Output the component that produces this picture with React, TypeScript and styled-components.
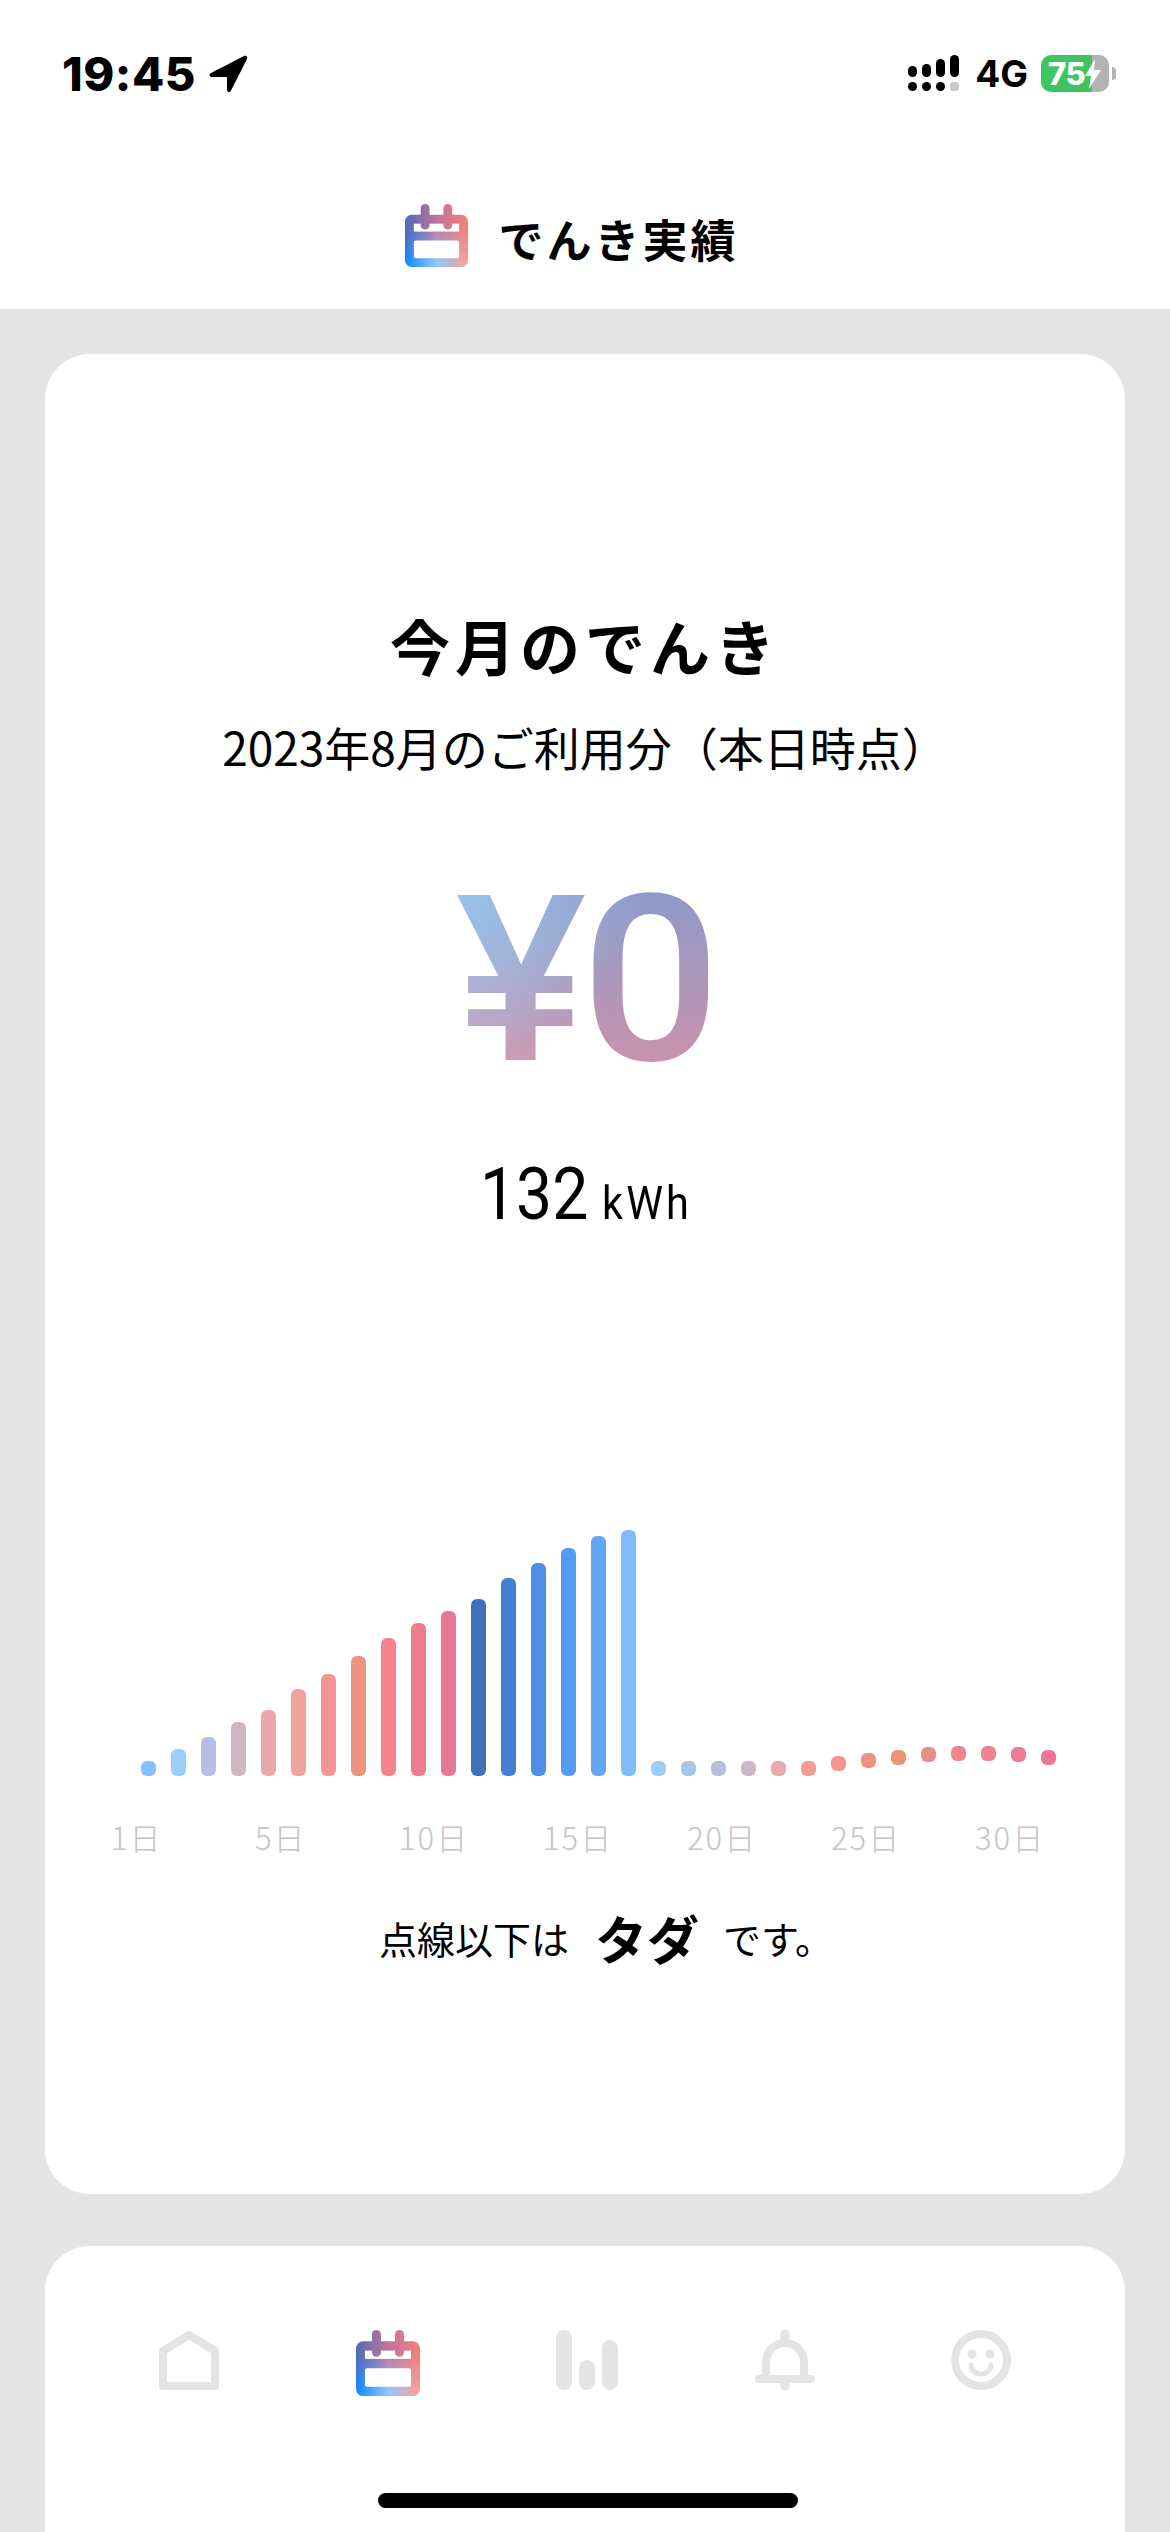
import React, { useId } from "react";
import styled, { createGlobalStyle } from "styled-components";

const GREY = "#e4e4e4";
const JP = `"Noto Sans CJK JP", "Noto Sans", sans-serif`;

const Global = createGlobalStyle`
  html, body { margin: 0; padding: 0; background: ${GREY}; }
  * { box-sizing: border-box; }
`;

const Page = styled.div`
  position: relative;
  width: 1170px;
  height: 2532px;
  overflow: hidden;
  background: ${GREY};
  font-family: ${JP};
  color: #000;
`;

const Top = styled.header`
  height: 309px;
  background: #fff;
  display: flex;
  flex-direction: column;
`;

const StatusBar = styled.div`
  height: 200px;
  padding: 50px 54px 0 62px;
  display: flex;
  justify-content: space-between;
  align-items: flex-start;
`;

const StatusLeft = styled.div`
  display: flex;
  align-items: center;
  gap: 12px;
`;

const Time = styled.span`
  font-family: Inter, sans-serif;
  font-weight: 800;
  font-size: 47px;
  line-height: 48px;
  letter-spacing: 0.5px;
`;

const StatusRight = styled.div`
  display: flex;
  align-items: center;
  padding-top: 5px;
`;

const Network = styled.span`
  font-family: Inter, sans-serif;
  font-weight: 700;
  font-size: 37px;
  line-height: 37px;
  margin: 0 13px 0 15px;
`;

const Battery = styled.div`
  position: relative;
  width: 68px;
  height: 37px;
  border-radius: 10px;
  background: linear-gradient(90deg, #3ec55f 0 51px, #b3b3b3 51px);
  color: #fff;
  font-family: Inter, sans-serif;
  font-weight: 800;
  font-size: 31px;
  line-height: 37px;
  letter-spacing: -0.5px;
  padding-left: 7px;
`;

const BatteryBolt = styled.svg`
  position: absolute;
  left: 44px;
  top: 4px;
`;

const BatteryNub = styled.div`
  width: 4px;
  height: 13px;
  margin-left: 3px;
  border-radius: 0 7px 7px 0;
  background: #b3b3b3;
`;

const TitleRow = styled.div`
  display: flex;
  align-items: center;
  justify-content: center;
  gap: 30px;
  height: 66px;
  margin-top: 2px;
  padding-right: 26px;
`;

const TitleText = styled.h1`
  margin: 0;
  font-size: 45px;
  font-weight: 700;
  line-height: 60px;
  letter-spacing: 3px;
  position: relative;
  top: 4px;
`;

const Card = styled.section`
  margin: 45px 45px 0;
  height: 1840px;
  background: #fff;
  border-radius: 45px;
  padding-top: 251px;
  display: flex;
  flex-direction: column;
  align-items: center;
`;

const Heading = styled.h2`
  margin: 0;
  font-size: 60px;
  font-weight: 700;
  line-height: 80px;
  letter-spacing: 5px;
`;

const Sub = styled.p`
  margin: 31px 0 0;
  font-size: 46px;
  font-weight: 400;
  line-height: 60px;
  white-space: nowrap;
`;

const Amount = styled.div`
  margin-top: 75px;
  font-family: Roboto, sans-serif;
  font-weight: 500;
  font-size: 232px;
  line-height: 260px;
  letter-spacing: -5px;
  padding: 0 12px 0 14px;
  transform: scaleX(1.06);
  background: radial-gradient(circle at 8% 14%, rgba(150, 200, 240, 0.85), rgba(150, 200, 240, 0) 52%),
    linear-gradient(90deg, rgba(255, 255, 255, 0.16), rgba(255, 255, 255, 0) 60%),
    linear-gradient(180deg, #8c9aca 14%, #cd92aa 86%);
  -webkit-background-clip: text;
  background-clip: text;
  color: transparent;
`;

const Usage = styled.div`
  margin-top: 38px;
  height: 90px;
  display: flex;
  align-items: baseline;
  line-height: 90px;
  font-family: Roboto, sans-serif;
`;

const UsageValue = styled.span`
  display: inline-block;
  font-size: 73px;
  transform: scaleX(0.88);
  transform-origin: left;
  margin-right: -2px;
`;

const UsageUnit = styled.span`
  display: inline-block;
  font-size: 46px;
  letter-spacing: 3.5px;
  transform: scaleX(0.9);
  transform-origin: left;
  margin-right: -12px;
`;

const Chart = styled.div`
  align-self: stretch;
  margin-top: 291px;
  height: 246px;
  padding-left: 96px;
  display: flex;
  align-items: flex-end;
  gap: 15px;
`;

const Bar = styled.div<{ $h: number; $lift: number; $c: string }>`
  flex: 0 0 15px;
  height: ${(p) => p.$h}px;
  margin-bottom: ${(p) => p.$lift}px;
  background: ${(p) => p.$c};
  border-radius: 6px;
`;

const Axis = styled.div`
  align-self: stretch;
  margin-top: 41px;
  padding-left: 66px;
  display: grid;
  grid-template-columns: repeat(7, 144px);
  color: #c4c4c4;
  font-size: 31px;
  font-weight: 300;
  line-height: 40px;
  letter-spacing: 2px;
`;

const Note = styled.div`
  margin-top: 49px;
  margin-left: 42px;
  display: flex;
  align-items: center;
  line-height: 64px;
  font-size: 38px;
`;

const Tada = styled.strong`
  font-size: 52px;
  font-weight: 700;
  margin: 0 24px 0 26px;
  letter-spacing: 0;
`;

const NavCard = styled.nav`
  margin: 52px 45px 0;
  height: 400px;
  background: #fff;
  border-radius: 45px 45px 0 0;
  padding: 84px 114px 0 114px;
  display: flex;
  justify-content: space-between;
  align-items: flex-start;
`;

const NavIcon = styled.svg`
  display: block;
  flex: none;
`;

const HomeBar = styled.div`
  position: absolute;
  left: 378px;
  top: 2493px;
  width: 420px;
  height: 15px;
  border-radius: 8px;
  background: #000;
`;

const CalendarIcon: React.FC<{ w: number; h: number }> = ({ w, h }) => {
  const id = useId().replace(/[^a-zA-Z0-9]/g, "");
  return (
    <NavIcon width={w} height={h} viewBox="0 0 64 64" preserveAspectRatio="none">
      <defs>
        <linearGradient id={`${id}b`} x1="0" x2="1" y1="0" y2="0">
          <stop offset="0" stopColor="#0f86ff" />
          <stop offset="0.5" stopColor="#8fc9ff" />
          <stop offset="1" stopColor="#ff9c90" />
        </linearGradient>
        <linearGradient id={`${id}t`} x1="0" x2="1" y1="0" y2="0">
          <stop offset="0" stopColor="#4f6cb6" />
          <stop offset="0.5" stopColor="#c2749a" />
          <stop offset="1" stopColor="#f27f80" />
        </linearGradient>
        <linearGradient id={`${id}v`} x1="0" x2="0" y1="0" y2="1">
          <stop offset="0.35" stopColor="#fff" />
          <stop offset="0.9" stopColor="#000" />
        </linearGradient>
        <mask id={`${id}s`}>
          <rect x="0" y="11" width="64" height="53" rx="7" fill="#fff" />
          <rect x="9" y="20" width="46" height="8" fill="#000" />
          <rect x="9" y="37" width="46" height="18" rx="2" fill="#000" />
          <rect x="16" y="0" width="9" height="26" rx="4.5" fill="#fff" />
          <rect x="39" y="0" width="9" height="26" rx="4.5" fill="#fff" />
        </mask>
        <mask id={`${id}f`}>
          <rect width="64" height="64" fill={`url(#${id}v)`} />
        </mask>
      </defs>
      <g mask={`url(#${id}s)`}>
        <rect width="64" height="64" fill={`url(#${id}b)`} />
        <rect width="64" height="64" fill={`url(#${id}t)`} mask={`url(#${id}f)`} />
      </g>
    </NavIcon>
  );
};

const HEIGHTS = [15, 27, 39, 54, 66, 87, 102, 120, 138, 153, 165, 177, 198, 213, 228, 240, 246];
const LIFTS = [0, 0, 0, 0, 0, 0, 5, 8, 11, 14, 15, 15, 14, 11];
const COLORS = [
  "#84c0fc", "#9dcdf9", "#b6bee6", "#ceb6c2", "#e8a9ad", "#f2a39c", "#f39592", "#ec9480",
  "#f4838a", "#ef7b8f", "#e77795", "#3d72bb", "#4380d3", "#4b8fe6", "#549cef", "#61a7f5",
  "#80bbfb", "#9dcdfb", "#a7c4e9", "#b7bddc", "#ccb7c4", "#e8aaad", "#ee9f90", "#f39690",
  "#ef9282", "#eb9478", "#e58f86", "#f1838a", "#f0818d", "#ee7b92", "#ec7793",
];
const DAYS = ["1日", "5日", "10日", "15日", "20日", "25日", "30日"];

export default function App() {
  return (
    <Page>
      <Global />
      <Top>
        <StatusBar>
          <StatusLeft>
            <Time>19:45</Time>
            <svg width="40" height="38" viewBox="0 0 40 38">
              <path d="M36 1 L3 18 C0.5 19.5 1.5 22 4 22 H19 V34.5 C19 37.5 22 38 23 35.5 L39 4 C40 1.5 38 0 36 1 Z" fill="#000" />
            </svg>
          </StatusLeft>
          <StatusRight>
            <svg width="52" height="37" viewBox="0 0 52 37">
              <rect x="0" y="11" width="9" height="11" rx="4.5" fill="#000" />
              <rect x="14" y="9" width="9" height="13" rx="4.5" fill="#000" />
              <rect x="28" y="4" width="9" height="18" rx="4.5" fill="#000" />
              <rect x="42" y="0" width="9" height="22" rx="4.5" fill="#000" />
              <rect x="0" y="27" width="9" height="9" rx="4.5" fill="#000" />
              <rect x="14" y="27" width="9" height="9" rx="4.5" fill="#000" />
              <rect x="28" y="27" width="9" height="9" rx="4.5" fill="#000" />
              <rect x="42" y="27" width="9" height="9" rx="3" fill="#c9c9c9" />
            </svg>
            <Network>4G</Network>
            <Battery>
              75
              <BatteryBolt width="16" height="30" viewBox="0 0 16 30">
                <path d="M10 0 L0 17 H6 L4 30 L16 11 H9 Z" fill="#fff" />
              </BatteryBolt>
            </Battery>
            <BatteryNub />
          </StatusRight>
        </StatusBar>
        <TitleRow>
          <CalendarIcon w={63} h={63} />
          <TitleText>でんき実績</TitleText>
        </TitleRow>
      </Top>

      <Card>
        <Heading>今月のでんき</Heading>
        <Sub>2023年8月のご利用分（本日時点）</Sub>
        <Amount>¥0</Amount>
        <Usage>
          <UsageValue>132</UsageValue>
          <UsageUnit>kWh</UsageUnit>
        </Usage>
        <Chart>
          {COLORS.map((c, i) => (
            <Bar
              key={i}
              $c={c}
              $h={i < HEIGHTS.length ? HEIGHTS[i] : 15}
              $lift={i < HEIGHTS.length ? 0 : LIFTS[i - HEIGHTS.length]}
            />
          ))}
        </Chart>
        <Axis>
          {DAYS.map((d) => (
            <span key={d}>{d}</span>
          ))}
        </Axis>
        <Note>
          <span>点線以下は</span>
          <Tada>タダ</Tada>
          <span>です。</span>
        </Note>
      </Card>

      <NavCard>
        <NavIcon width="60" height="60" viewBox="0 0 60 60" fill="none" stroke={GREY} strokeWidth="8" strokeLinejoin="round">
          <path d="M4 56 V21 L30 5 L56 21 V56 Z" />
        </NavIcon>
        <CalendarIcon w={64} h={66} />
        <NavIcon width="62" height="60" viewBox="0 0 62 60" fill={GREY}>
          <rect x="0" y="0" width="16" height="60" rx="8" />
          <rect x="23" y="30" width="16" height="30" rx="8" />
          <rect x="46" y="10" width="16" height="50" rx="8" />
        </NavIcon>
        <NavIcon width="60" height="60" viewBox="0 0 60 60" fill="none" stroke={GREY}>
          <path d="M11 49 V32 A19 19 0 0 1 49 32 V49" strokeWidth="8" />
          <path d="M30 4 V12 M30 50 V56" strokeWidth="9" strokeLinecap="round" />
          <path d="M4 49 H56" strokeWidth="8" strokeLinecap="round" />
        </NavIcon>
        <NavIcon width="60" height="60" viewBox="0 0 60 60" fill="none" stroke={GREY}>
          <circle cx="30" cy="30" r="26" strokeWidth="8" />
          <circle cx="21" cy="24" r="4.5" fill={GREY} stroke="none" />
          <circle cx="39" cy="24" r="4.5" fill={GREY} stroke="none" />
          <path d="M20 35 A10 9 0 0 0 40 35" strokeWidth="5" strokeLinecap="round" />
        </NavIcon>
      </NavCard>
      <HomeBar />
    </Page>
  );
}
